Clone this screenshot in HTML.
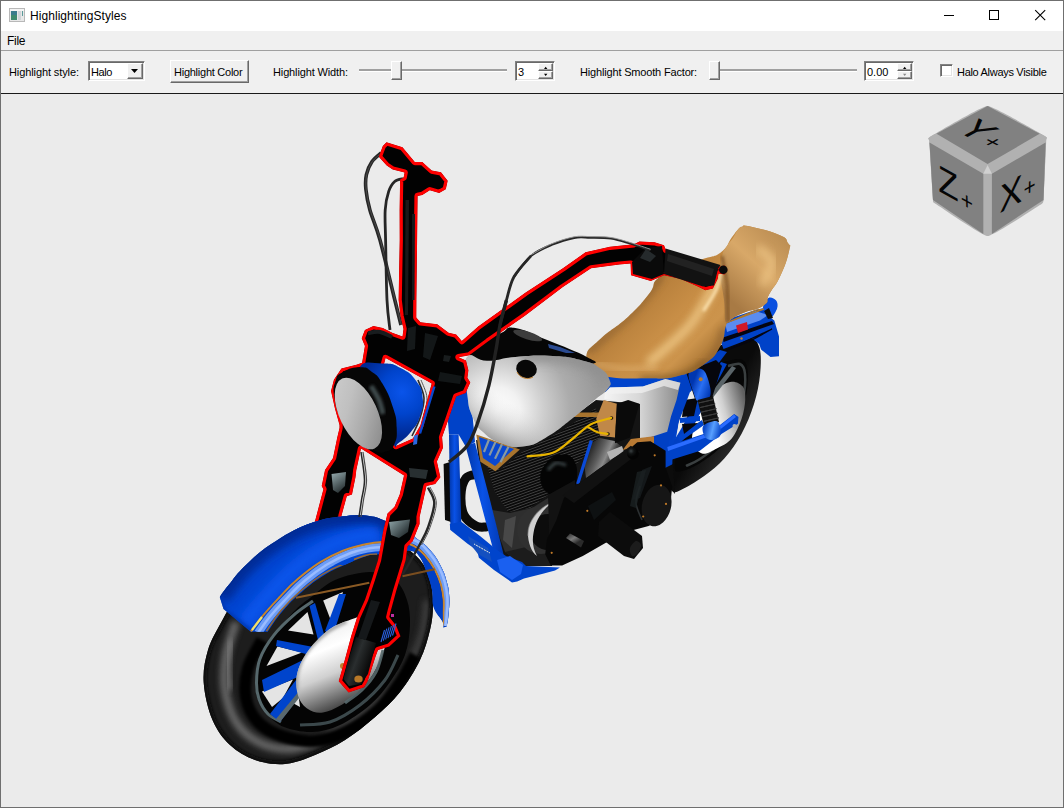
<!DOCTYPE html>
<html><head><meta charset="utf-8"><title>HighlightingStyles</title>
<style>
html,body{margin:0;padding:0;}
body{width:1064px;height:808px;overflow:hidden;background:#f0f0f0;font-family:"Liberation Sans",sans-serif;font-size:11px;color:#000;position:relative;}
.abs{position:absolute;}
#win{position:absolute;left:0;top:0;width:1062px;height:806px;border:1px solid #6f6f6f;background:#f0f0f0;}
#title{position:absolute;left:1px;top:1px;width:1062px;height:30px;background:#fff;}
#title .t{position:absolute;left:29px;top:8px;letter-spacing:0.06px;font-size:12px;line-height:14px;white-space:nowrap;}
#menu{position:absolute;left:1px;top:31px;width:1062px;height:19px;background:#f0f0f0;}
#menu .t{position:absolute;left:6px;top:3px;letter-spacing:-0.3px;font-size:12px;line-height:14px;}
#sep1{position:absolute;left:1px;top:50px;width:1062px;height:1px;background:#a0a0a0;}
#tb{position:absolute;left:1px;top:51px;width:1062px;height:42px;background:#f0f0f0;}
.lbl{position:absolute;top:66px;font-size:11px;line-height:13px;white-space:nowrap;}
#sep2{position:absolute;left:1px;top:93px;width:1062px;height:1px;background:#1a1a1a;}
#view{position:absolute;left:1px;top:94px;width:1062px;height:713px;background:#ebebeb;overflow:hidden;}
.sunk{position:absolute;background:#fff;border:1px solid;border-color:#828282 #fff #fff #828282;box-shadow:inset 1px 1px 0 #696969, inset -1px -1px 0 #e3e3e3;box-sizing:border-box;}
.btn{position:absolute;background:#f0f0f0;box-sizing:border-box;border:1px solid;border-color:#fff #696969 #696969 #fff;box-shadow:inset -1px -1px 0 #a0a0a0, inset 1px 1px 0 #f0f0f0;}
.groove{position:absolute;height:1px;background:#a0a0a0;box-shadow:0 1px 0 #fff, 0 -1px 0 #a0a0a0;}
</style></head><body>
<div id="win"></div>
<div id="title">
 <svg class="abs" style="left:8px;top:7px" width="16" height="14" viewBox="0 0 16 14">
  <rect x="0.5" y="0.5" width="15" height="13" fill="#e8e8e8" stroke="#b8b8b8"/>
  <rect x="1" y="1" width="14" height="2" fill="#f4f4f4"/>
  <rect x="2" y="3" width="6" height="9" fill="#3f8a6e"/>
  <rect x="2" y="3" width="6" height="4" fill="#3a7c8c"/>
  <rect x="9" y="3" width="3" height="9" fill="#d0d4d8"/>
  <rect x="13" y="3" width="1" height="5" fill="#5a9a9a"/>
 </svg>
 <div class="t">HighlightingStyles</div>
 <svg class="abs" style="left:930px;top:0" width="132" height="30" viewBox="0 0 132 30">
  <path d="M13 14.5h10" stroke="#000" stroke-width="1" fill="none"/>
  <rect x="58.5" y="9.5" width="9" height="9" stroke="#000" stroke-width="1" fill="none"/>
  <path d="M104.200 9.200l10 10M114.200 9.200l-10 10" stroke="#000" stroke-width="1.1" fill="none"/>
 </svg>
</div>
<div id="menu"><div class="t">File</div></div>
<div id="sep1"></div>
<div id="tb"></div>
<div class="lbl" style="left:9px;letter-spacing:-0.1px">Highlight style:</div>
<div class="sunk" style="left:88px;top:61px;width:57px;height:20px"></div>
<div class="lbl" style="left:91px;letter-spacing:-0.4px">Halo</div>
<div class="btn" style="left:127px;top:63px;width:16px;height:16px"></div>
<svg class="abs" style="left:130px;top:68px" width="9" height="6"><path d="M1 1h7l-3.500 4z" fill="#000"/></svg>
<div class="btn" style="left:170px;top:60px;width:79px;height:23px"></div>
<div class="lbl" style="left:174px;letter-spacing:-0.25px">Highlight Color</div>
<div class="lbl" style="left:273px;letter-spacing:-0.13px">Highlight Width:</div>
<div class="groove" style="left:359px;top:70px;width:148px"></div>
<div class="btn" style="left:391px;top:61px;width:11px;height:19px"></div>
<div class="sunk" style="left:515px;top:61px;width:40px;height:20px"></div>
<div class="lbl" style="left:518px">3</div>
<div class="btn" style="left:538px;top:63px;width:15px;height:8px"></div>
<div class="btn" style="left:538px;top:71px;width:15px;height:8px"></div>
<svg class="abs" style="left:542px;top:65px" width="7" height="12"><path d="M2 4h3.400l-1.700-2.200z M2 8.800h3.400l-1.700 2.200z" fill="#000"/></svg>
<div class="lbl" style="left:580px;letter-spacing:-0.17px">Highlight Smooth Factor:</div>
<div class="groove" style="left:712px;top:70px;width:145px"></div>
<div class="btn" style="left:709px;top:61px;width:11px;height:19px"></div>
<div class="sunk" style="left:864px;top:61px;width:50px;height:20px"></div>
<div class="lbl" style="left:867px">0.00</div>
<div class="btn" style="left:897px;top:63px;width:15px;height:8px"></div>
<div class="btn" style="left:897px;top:71px;width:15px;height:8px"></div>
<svg class="abs" style="left:901px;top:65px" width="7" height="12"><path d="M2 4h3.400l-1.700-2.200z" fill="#000"/><path d="M2 8.800h3.400l-1.700 2.200z" fill="#888"/></svg>
<div class="sunk" style="left:940px;top:64px;width:13px;height:13px"></div>
<div class="lbl" style="left:957px;letter-spacing:-0.3px">Halo Always Visible</div>
<div id="sep2"></div>
<div id="view">
<svg id="scene" width="1062" height="713" viewBox="1 94 1062 713" style="position:absolute;left:0;top:0">
<defs><linearGradient id="gTire" gradientUnits="userSpaceOnUse" x1="203" y1="700" x2="300" y2="640"><stop offset="0" stop-color="#0a0a0a"/><stop offset="0.25" stop-color="#3a3a3a"/><stop offset="0.45" stop-color="#1a1a1a"/><stop offset="1" stop-color="#050505"/></linearGradient><linearGradient id="gFender" gradientUnits="userSpaceOnUse" x1="230" y1="640" x2="330" y2="500"><stop offset="0" stop-color="#0038b0"/><stop offset="0.35" stop-color="#0048d8"/><stop offset="0.7" stop-color="#0044cc"/><stop offset="1" stop-color="#0036a8"/></linearGradient><linearGradient id="gHub" gradientUnits="userSpaceOnUse" x1="300" y1="690" x2="385" y2="650"><stop offset="0" stop-color="#8a8a8a"/><stop offset="0.3" stop-color="#f4f4f4"/><stop offset="0.55" stop-color="#ffffff"/><stop offset="0.8" stop-color="#9a9a9a"/><stop offset="1" stop-color="#303030"/></linearGradient><linearGradient id="gLens" gradientUnits="userSpaceOnUse" x1="378" y1="388" x2="338" y2="436"><stop offset="0" stop-color="#8a8a8a"/><stop offset="0.35" stop-color="#a8a8a8"/><stop offset="0.7" stop-color="#c0c0c0"/><stop offset="1" stop-color="#cacaca"/></linearGradient><radialGradient id="gHL" gradientUnits="userSpaceOnUse" cx="402" cy="392" r="44" ><stop offset="0" stop-color="#0a54ea"/><stop offset="0.5" stop-color="#0044cc"/><stop offset="1" stop-color="#002a94"/></radialGradient><linearGradient id="gTank" gradientUnits="userSpaceOnUse" x1="470" y1="440" x2="580" y2="350"><stop offset="0" stop-color="#707070"/><stop offset="0.18" stop-color="#d8d8d8"/><stop offset="0.4" stop-color="#ffffff"/><stop offset="0.6" stop-color="#e0e0e0"/><stop offset="0.85" stop-color="#a0a0a0"/><stop offset="1" stop-color="#8c8c8c"/></linearGradient><linearGradient id="gSeat" gradientUnits="userSpaceOnUse" x1="640" y1="380" x2="700" y2="250"><stop offset="0" stop-color="#a87840"/><stop offset="0.3" stop-color="#c89858"/><stop offset="0.6" stop-color="#d8a868"/><stop offset="1" stop-color="#b88848"/></linearGradient><linearGradient id="gSeatB" gradientUnits="userSpaceOnUse" x1="730" y1="300" x2="790" y2="235"><stop offset="0" stop-color="#a87a44"/><stop offset="0.5" stop-color="#d8a868"/><stop offset="1" stop-color="#b88a50"/></linearGradient><linearGradient id="gSide" gradientUnits="userSpaceOnUse" x1="605" y1="400" x2="680" y2="400"><stop offset="0" stop-color="#f4f4f4"/><stop offset="0.45" stop-color="#d8d8d8"/><stop offset="1" stop-color="#8a8a8a"/></linearGradient><linearGradient id="gDrum" gradientUnits="userSpaceOnUse" x1="712" y1="420" x2="748" y2="410"><stop offset="0" stop-color="#ffffff"/><stop offset="0.4" stop-color="#d0d0d0"/><stop offset="1" stop-color="#606060"/></linearGradient><linearGradient id="gRT" gradientUnits="userSpaceOnUse" x1="700" y1="440" x2="750" y2="470"><stop offset="0" stop-color="#0a0a0a"/><stop offset="0.35" stop-color="#1c1c1c"/><stop offset="0.7" stop-color="#303030"/><stop offset="1" stop-color="#141414"/></linearGradient><linearGradient id="gShk" gradientUnits="userSpaceOnUse" x1="692" y1="385" x2="711" y2="392"><stop offset="0" stop-color="#0036b0"/><stop offset="0.45" stop-color="#2a70f4"/><stop offset="1" stop-color="#0038b4"/></linearGradient><linearGradient id="gShk2" gradientUnits="userSpaceOnUse" x1="704" y1="430" x2="720" y2="434"><stop offset="0" stop-color="#0a48c8"/><stop offset="0.5" stop-color="#58a0ff"/><stop offset="1" stop-color="#0a48c8"/></linearGradient><filter id="bl5" x="-30%" y="-30%" width="160%" height="160%"><feGaussianBlur stdDeviation="4.500"/></filter><linearGradient id="gSeatM" gradientUnits="userSpaceOnUse" x1="628" y1="300" x2="700" y2="372"><stop offset="0" stop-color="#986830"/><stop offset="0.12" stop-color="#b8803c"/><stop offset="0.45" stop-color="#c88e46"/><stop offset="0.75" stop-color="#cc944c"/><stop offset="1" stop-color="#a47030"/></linearGradient><linearGradient id="gSeatB" gradientUnits="userSpaceOnUse" x1="722" y1="290" x2="790" y2="240"><stop offset="0" stop-color="#966830"/><stop offset="0.35" stop-color="#c08a48"/><stop offset="0.7" stop-color="#dca660"/><stop offset="1" stop-color="#be8c48"/></linearGradient><pattern id="fins" width="4" height="2.600" patternUnits="userSpaceOnUse" patternTransform="rotate(-20)"><rect width="4" height="2.600" fill="#0a0a0a"/><rect y="0" width="4" height="0.800" fill="#454545"/></pattern><linearGradient id="gCyl" gradientUnits="userSpaceOnUse" x1="590" y1="450" x2="616" y2="462"><stop offset="0" stop-color="#2a2a2a"/><stop offset="0.35" stop-color="#5c5c5c"/><stop offset="0.6" stop-color="#8a8a8a"/><stop offset="0.8" stop-color="#444"/><stop offset="1" stop-color="#1a1a1a"/></linearGradient><linearGradient id="gTube" gradientUnits="objectBoundingBox" x1="0" y1="0" x2="1" y2="0"><stop offset="0" stop-color="#0036a8"/><stop offset="0.45" stop-color="#0a52e6"/><stop offset="1" stop-color="#0038b0"/></linearGradient><linearGradient id="gKick" gradientUnits="userSpaceOnUse" x1="566" y1="536" x2="572" y2="546"><stop offset="0" stop-color="#3a3a3a"/><stop offset="0.5" stop-color="#7a7a7a"/><stop offset="1" stop-color="#2a2a2a"/></linearGradient><radialGradient id="gBall" gradientUnits="userSpaceOnUse" cx="631" cy="451" r="6" ><stop offset="0" stop-color="#3a4042"/><stop offset="0.5" stop-color="#101212"/><stop offset="1" stop-color="#030303"/></radialGradient><radialGradient id="gTankRad" gradientUnits="userSpaceOnUse" cx="497" cy="410" r="104" ><stop offset="0" stop-color="#ffffff"/><stop offset="0.22" stop-color="#f2f2f2"/><stop offset="0.45" stop-color="#cecece"/><stop offset="0.7" stop-color="#acacac"/><stop offset="1" stop-color="#989898"/></radialGradient><radialGradient id="gTankR" gradientUnits="userSpaceOnUse" cx="600" cy="380" r="60" ><stop offset="0" stop-color="#9c9c9c"/><stop offset="0.6" stop-color="#a8a8a8"/><stop offset="1" stop-color="#a8a8a8"/></radialGradient><linearGradient id="gTank2" gradientUnits="userSpaceOnUse" x1="540" y1="400" x2="610" y2="375"><stop offset="0" stop-color="#a4a4a4"/><stop offset="1" stop-color="#a4a4a4"/></linearGradient><linearGradient id="gTankTip" gradientUnits="userSpaceOnUse" x1="470" y1="440" x2="500" y2="395"><stop offset="0" stop-color="rgba(90,90,90,0.85)"/><stop offset="0.5" stop-color="rgba(140,140,140,0.35)"/><stop offset="1" stop-color="rgba(200,200,200,0)"/></linearGradient><filter id="bl3" x="-20%" y="-20%" width="140%" height="140%"><feGaussianBlur stdDeviation="3"/></filter><filter id="bl2" x="-20%" y="-20%" width="140%" height="140%"><feGaussianBlur stdDeviation="1.800"/></filter><radialGradient id="gHub2" gradientUnits="userSpaceOnUse" cx="318" cy="652" r="80" ><stop offset="0" stop-color="#ffffff"/><stop offset="0.25" stop-color="#f6f6f6"/><stop offset="0.48" stop-color="#c0c0c0"/><stop offset="0.72" stop-color="#606060"/><stop offset="1" stop-color="#181818"/></radialGradient><linearGradient id="gHub3" gradientUnits="userSpaceOnUse" x1="312" y1="622" x2="350" y2="716"><stop offset="0" stop-color="#e8e8e8"/><stop offset="0.3" stop-color="#ffffff"/><stop offset="0.55" stop-color="#d0d0d0"/><stop offset="0.78" stop-color="#707070"/><stop offset="1" stop-color="#141414"/></linearGradient><radialGradient id="gFen2" gradientUnits="userSpaceOnUse" cx="250" cy="625" r="230" ><stop offset="0" stop-color="#0a52e4"/><stop offset="0.35" stop-color="#0046d0"/><stop offset="0.7" stop-color="#003cbc"/><stop offset="1" stop-color="#0034a4"/></radialGradient><linearGradient id="gSh1" gradientUnits="userSpaceOnUse" x1="333" y1="474" x2="345" y2="492"><stop offset="0" stop-color="#9ab0b4"/><stop offset="1" stop-color="#20282a"/></linearGradient><linearGradient id="gSh2" gradientUnits="userSpaceOnUse" x1="392" y1="521" x2="408" y2="537"><stop offset="0" stop-color="#90a6aa"/><stop offset="1" stop-color="#1c2426"/></linearGradient><linearGradient id="gLegLo" gradientUnits="userSpaceOnUse" x1="350" y1="650" x2="372" y2="658"><stop offset="0" stop-color="#0c0e0e"/><stop offset="0.4" stop-color="#2a2e2f"/><stop offset="1" stop-color="#0a0a0a"/></linearGradient></defs>
<path d="M714 350 C717.2 344.8 718.5 346.2 724.3 344 C730.1 341.8 743.1 336.3 749 337 C754.9 337.7 757.6 341.8 759.5 348 C761.4 354.2 761 365 760.1 374.3 C759.2 383.6 757.1 394.1 754 404 C750.9 413.9 746.6 424.6 741.6 433.7 C736.6 442.8 730.5 451.4 724.3 458.4 C718.1 465.4 711.1 470.8 704.5 475.7 C697.9 480.6 689.9 485.4 684.7 488.1 C679.5 490.8 676.3 493.2 673.5 491.8 C670.7 490.4 668.2 486.1 668 480 C667.8 473.9 668.3 466.7 672 455 C675.7 443.3 684.5 423.3 690 410 C695.5 396.7 701 385 705 375 C709 365 710.8 355.2 714 350Z" fill="url(#gRT)"/>
<path d="M716 366 C720 360.5 720 363 724.3 361.9 C728.6 360.8 737.7 357.8 741.6 359.4 C745.5 361 747.2 365.2 747.8 371.8 C748.4 378.4 747.6 389.5 745.3 399 C743 408.5 738.5 420.4 734.2 428.7 C729.9 436.9 725.1 442.7 719.3 448.5 C713.5 454.3 705.7 459.7 699.5 463.4 C693.3 467.1 686.3 470 682.2 470.8 C678.1 471.6 675.2 473.4 674.8 468.3 C674.4 463.2 675.8 452.2 680 440 C684.2 427.8 694 407.3 700 395 C706 382.7 712 371.5 716 366Z" fill="#060606"/>
<path d="M728 366 C730 365.7 737.2 362.7 740 364 C742.8 365.3 744.5 368.3 745 374 C745.5 379.7 745 389.5 743 398 C741 406.5 737 417.3 733 425 C729 432.7 724.5 438.3 719 444 C713.5 449.7 705.5 455.3 700 459 C694.5 462.7 688.3 464.8 686 466" fill="none" stroke="#3a3f40" stroke-width="2.500"/>
<path d="M716.8 389 C722.1 384.3 727.4 382.1 731.7 381.7 C736 381.3 740.5 383.7 742.8 386.6 C745.1 389.5 745.5 393.6 745.3 399 C745.1 404.4 743.9 412.2 741.6 418.8 C739.3 425.4 735.8 433.7 731.7 438.6 C727.6 443.6 721.8 446 716.8 448.5 C711.8 451 706.1 454.9 702 453.5 C697.9 452.1 692.3 447.2 692 440 C691.7 432.8 695.9 418.5 700 410 C704.1 401.5 711.5 393.7 716.8 389Z" fill="url(#gDrum)"/>
<path d="M676 398 L683 396 L674 450 L666 452Z" fill="#0044cc"/>
<path d="M721 362 L727 364 L690 432 L676 448 L672 444Z" fill="#0040c4"/>
<path d="M732 366 L736 368 L708 404 L704 402Z" fill="#5a6468"/>
<path d="M680 418 L700 416 L700 421 L680 423Z" fill="#0044cc"/>
<path d="M678 436 L702 420 L704 425 L680 442Z" fill="#0044cc"/>
<path d="M684 400 L698 398 L694 416 L682 417Z" fill="#07070c"/>
<path d="M682 424 L698 423 L684 434Z" fill="#07070c"/>
<path d="M671 426 L678 426 L670 458 L661 458Z" fill="#0042c8"/>
<path d="M646 436 L670 428 L668 454 L648 442Z" fill="#0040c4"/>
<path d="M662 448 L673 446 L672 472 L665 470Z" fill="#0040c4"/>
<path d="M665 468 L673 464 L675 494 L668 486Z" fill="#0c0c0c"/>
<path d="M664.9 448.5 L667.3 446 L711.9 431.2 L734.2 413.9 L738.5 417 L737.9 423.8 L721.8 433.7 L699.5 451 L667.3 460.9Z" fill="#0042c8"/>
<path d="M667.3 447 L711.9 432 L734.2 414.5 L736 417 L713 435 L668 451Z" fill="#2a6cff"/>
<circle cx="734.500" cy="426" r="2" fill="#b0b0b0"/>
<path d="M720 340 L725.4 323.3 L732.9 317.6 L755.5 310.1 L763 308.2 L768.6 297.9 L776.2 300.7 L777.1 308.2 L770.5 317.6 L774.3 320.5 L779 336.4 L779 356.2 L770.5 357.1 L761.1 349.6 L759.2 344 L751.7 338.3 L723.5 349Z" fill="#0042c8"/>
<path d="M763 308.2 C762.7 304.9 766.4 299.1 768.6 297.9 C770.8 296.6 774.8 299 776.2 300.7 C777.6 302.4 778.1 305.4 777.1 308.2 C776.1 311 772.9 317.6 770.5 317.6 C768.1 317.6 763.3 311.5 763 308.2Z" fill="#0a50e0"/>
<path d="M725.4 324 L755.5 311 L768 315 L760 320.5 L727 332Z" fill="#5a8cf0"/>
<path d="M726 323 L756 310.2 L764 309Z" fill="none" stroke="#b07828" stroke-width="1.200"/>
<path d="M723 337.5 L772 321 L774 324 L723.5 342Z" fill="#050510"/>
<path d="M736 325.5 L747 322 L748 329.5 L738 333Z" fill="#d01828"/>
<path d="M724.8 351 L749.5 341.5 L772 329Z" fill="none" stroke="#050510" stroke-width="1.200"/>
<circle cx="741.500" cy="338.500" r="1.200" fill="#c08030"/>
<path d="M764 311 L769 308 L773 318 L768 319Z" fill="#0c0c0c"/>
<path d="M604 374 L690 370 L700 380 L690 392 L640 392 L604 392Z" fill="#0044cc"/>
<path d="M664 388 L690 372 L720 350 L727 352 L712 372 L690 392 L672 440 L664 440Z" fill="#0040c4"/>
<path d="M686 372 L716 360 L722 366 L712 398 L696 402Z" fill="#06060c"/>
<path d="M688.5 374 C689.1 370.1 694.2 368.8 697 368.5 C699.8 368.2 702.7 368.4 705 372 C707.3 375.6 710.1 385.4 710.6 390 C711.1 394.6 710.1 397.6 708 399.5 C705.9 401.4 700.5 402.8 698 401.5 C695.5 400.2 694.9 396.6 693.3 392 C691.7 387.4 687.9 377.9 688.5 374Z" fill="url(#gShk)"/>
<path d="M697.5 400 L713 396 L719 422 L704 426Z" fill="#101010"/>
<path d="M698.5 403 L714 399.5Z" fill="none" stroke="#3c3c3c" stroke-width="1"/>
<path d="M699.8 407.6 L715.2 404.1Z" fill="none" stroke="#3c3c3c" stroke-width="1"/>
<path d="M701.1 412.2 L716.4 408.7Z" fill="none" stroke="#3c3c3c" stroke-width="1"/>
<path d="M702.4 416.8 L717.6 413.3Z" fill="none" stroke="#3c3c3c" stroke-width="1"/>
<path d="M703.7 421.4 L718.8 417.9Z" fill="none" stroke="#3c3c3c" stroke-width="1"/>
<path d="M703.2 426 C705 423.3 713.1 420.7 716 421 C718.9 421.3 719.8 425.5 720.5 428 C721.2 430.5 721.4 434 720 436 C718.6 438 714.5 439.8 712 440 C709.5 440.2 706.5 439.3 705 437 C703.5 434.7 701.4 428.7 703.2 426Z" fill="url(#gShk2)"/>
<circle cx="700.700" cy="379.200" r="2" fill="#b07830"/>
<path d="M586.3 356.4 C587.5 348.1 588.8 349.8 600 339.2 C611.2 328.6 615.2 328.7 628.2 316.7 C641.2 304.7 639.9 305.1 648.9 294.1 C657.9 283.1 648.5 284.3 662 275.3 C675.5 266.3 684.1 266.2 699.7 260.2 C715.3 254.2 711.9 258.7 720.4 252.7 C728.9 246.7 727 243.8 731.7 237.6 C736.4 231.4 735.1 232.5 738 229.5 C740.9 226.5 739.6 227.4 742.5 226.5 C745.4 225.6 739.3 224.1 749 226.3 C758.7 228.5 768.3 230.3 778.7 234.8 C789.1 239.3 785.3 239 788.1 243.3 C790.9 247.6 791.1 242.3 789.1 250.8 C787.1 259.3 785.9 263.8 780.6 275.3 C775.3 286.8 773.8 286.1 769.3 294.1 C764.8 302.1 770.7 300.4 763.7 305.4 C756.7 310.4 752 308.9 743 312.9 C734 316.9 734.4 316.9 729.8 320.4 C725.2 323.9 728.4 319.2 725.9 326 C723.4 332.8 726 335.8 720.3 345.9 C714.6 356 716 355.7 704.7 363.7 C693.4 371.7 693.4 372.1 678 376 C662.6 379.9 665.2 377.9 646.8 378.2 C628.4 378.5 622.7 379.1 609 377 C595.3 374.9 601.7 375.9 595.6 370.4 C589.5 364.9 585.1 364.7 586.3 356.4Z" fill="url(#gSeatM)"/>
<clipPath id="cSeat"><path d="M586.3 356.4 C587.5 348.1 588.8 349.8 600 339.2 C611.2 328.6 615.2 328.7 628.2 316.7 C641.2 304.7 639.9 305.1 648.9 294.1 C657.9 283.1 648.5 284.3 662 275.3 C675.5 266.3 684.1 266.2 699.7 260.2 C715.3 254.2 711.9 258.7 720.4 252.7 C728.9 246.7 727 243.8 731.7 237.6 C736.4 231.4 735.1 232.5 738 229.5 C740.9 226.5 739.6 227.4 742.5 226.5 C745.4 225.6 739.3 224.1 749 226.3 C758.7 228.5 768.3 230.3 778.7 234.8 C789.1 239.3 785.3 239 788.1 243.3 C790.9 247.6 791.1 242.3 789.1 250.8 C787.1 259.3 785.9 263.8 780.6 275.3 C775.3 286.8 773.8 286.1 769.3 294.1 C764.8 302.1 770.7 300.4 763.7 305.4 C756.7 310.4 752 308.9 743 312.9 C734 316.9 734.4 316.9 729.8 320.4 C725.2 323.9 728.4 319.2 725.9 326 C723.4 332.8 726 335.8 720.3 345.9 C714.6 356 716 355.7 704.7 363.7 C693.4 371.7 693.4 372.1 678 376 C662.6 379.9 665.2 377.9 646.8 378.2 C628.4 378.5 622.7 379.1 609 377 C595.3 374.9 601.7 375.9 595.6 370.4 C589.5 364.9 585.1 364.7 586.3 356.4Z"/></clipPath>
<g clip-path="url(#cSeat)">
<path d="M721 262 C723.4 245.5 726.3 247.6 733 238 C739.7 228.4 733.5 227.1 746 226 C758.5 224.9 768.3 228.7 780 234 C791.7 239.3 789.5 234.8 790 246 C790.5 257.2 788.4 260 782 276 C775.6 292 776.1 295.9 766 306 C755.9 316.1 754.1 309.2 744 314 C733.9 318.8 733.3 327.7 728 324 C722.7 320.3 725.9 316.5 724 300 C722.1 283.5 718.6 278.5 721 262Z" fill="url(#gSeatB)"/>
<path d="M722 256 C722.8 260.8 726 274 727 285 C728 296 727.8 315.8 728 322" fill="none" stroke="#7a5020" stroke-width="3" filter="url(#bl2)" opacity="0.8"/>
<path d="M650 362 C656.7 355.8 679 338.3 690 325 C701 311.7 711.7 289.2 716 282" fill="none" stroke="#f4d090" stroke-width="7" filter="url(#bl5)" opacity="0.95" stroke-linecap="round"/>
<path d="M704 310 C706 306.7 713.2 296.3 716 290 C718.8 283.7 720.2 275 721 272" fill="none" stroke="#ffe8b8" stroke-width="3" filter="url(#bl2)" opacity="0.9" stroke-linecap="round"/>
<path d="M596 364 C600.8 364.8 615.2 368.3 625 369 C634.8 369.7 650 368.2 655 368" fill="none" stroke="#e4b878" stroke-width="5" filter="url(#bl3)" opacity="0.6" stroke-linecap="round"/>
<path d="M640 379 C646.7 378.5 669 378.8 680 376 C691 373.2 701.7 364.3 706 362" fill="none" stroke="#7a5424" stroke-width="6" filter="url(#bl3)" opacity="0.7"/>
<path d="M760 250 C762 252 771.3 256.7 772 262 C772.7 267.3 765.3 278.7 764 282" fill="none" stroke="#f0c888" stroke-width="8" filter="url(#bl5)" opacity="0.8" stroke-linecap="round"/>
<path d="M590 352 C596.4 346.3 618.4 327.5 628.2 318 C638 308.5 643.3 301.8 648.9 295 C654.5 288.2 659.8 280 662 277" fill="none" stroke="#8a6030" stroke-width="5" filter="url(#bl3)" opacity="0.7"/>
<path d="M700 368 C702.7 365 712.2 356.7 716 350 C719.8 343.3 721.8 331.7 723 328" fill="none" stroke="#8a6030" stroke-width="5" filter="url(#bl3)" opacity="0.7"/>
</g>
<path d="M609.9 387.5 L642.8 386.5 L665.4 379 L680.4 382.8 L676.6 399.7 L671 416.6 L667.2 431.7 L650.3 437.3 L629.6 439.2 L635.3 416.6 L637.1 407.2 L622.1 401.6 L604.2 398.8 L605.2 392.2Z" fill="url(#gSide)"/>
<path d="M609.9 387.5 L642.8 386.5 L665.4 379 L680.4 382.8 L678 390 L664 386 L642 393 L606 394Z" fill="#f2f2f2" opacity="0.7"/>
<path d="M443.6 464 L450 462 L451 522 L445 520Z" fill="#0a0a0a"/>
<path d="M478 474 C476 474.7 468.8 474.5 466 478 C463.2 481.5 461.3 488.8 461 495 C460.7 501.2 461.5 509.8 464 515 C466.5 520.2 472.3 524 476 526 C479.7 528 484.3 526.8 486 527" fill="none" stroke="#0a0a0a" stroke-width="9" stroke-linecap="round"/>
<path d="M476 440 L500 444 L545 437 L596 400 L640 404 L640 445 L600 470 L560 500 L548 560 L520 568 L500 556 L490 520 L480 470Z" fill="#141414"/>
<path d="M484.5 456 L500 470 L522 452 L560 432 L596 408 L600 440 L575 466 L552 492 L530 508 L508 512 L494 490Z" fill="url(#fins)"/>
<path d="M492 510 L510 513 L532 508 L548 498 L560 505 L548 560 L524 566 L505 552 L497 530Z" fill="#2e2e2e"/>
<path d="M505 520 L516 516 L512 548 L503 540Z" fill="#484848"/>
<path d="M505 552 L524 566 L552 566 L556 540Z" fill="#1c1c1c"/>
<circle cx="541" cy="530" r="24" fill="#303030"/>
<circle cx="548" cy="532" r="18" fill="#0c0c0c"/>
<path d="M553 502 C538 508 527 522 528 536 C529 547 533 553 537 556 C533 549 532 541 533.500 533 C535.500 520 543 509 553 502Z" fill="#d0d0d0"/>
<path d="M553 502 C538 508 527 522 528 536" fill="none" stroke="#8a8a8a" stroke-width="1.200" opacity="0.6"/>
<path d="M541 472 C542.7 466.8 548.2 459.7 553 457 C557.8 454.3 566 453.8 570 456 C574 458.2 576.5 464.3 577 470 C577.5 475.7 576.5 485.7 573 490 C569.5 494.3 561 496.3 556 496 C551 495.7 545.5 492 543 488 C540.5 484 539.3 477.2 541 472Z" fill="#040404"/>
<path d="M548 470 C549.3 468.8 553 463.8 556 463 C559 462.2 564.3 464.7 566 465" fill="none" stroke="#3a4446" stroke-width="3" filter="url(#bl2)"/>
<path d="M591 443 L600 438 L614.5 441 L622 447 L604 470 L586 478 L584 462Z" fill="url(#gCyl)"/>
<path d="M607 452 L622 446 L624 452 L610 460Z" fill="#b4b4b4"/>
<path d="M591.3 440.4 L577.7 484Z" fill="none" stroke="#0a4ad8" stroke-width="3.200"/>
<path d="M630.8 439 L654 436.3 L654 443 L622.7 450Z" fill="#b87a34"/>
<path d="M573.6 412.5 L602 412.5 L602 417 L573.6 417Z" fill="#a8742e"/>
<path d="M476.3 434.5 L519.9 449.5 L495.4 471.3 L480.4 461.7Z" fill="#a8742e"/>
<path d="M479 437 L514 449 L495 466 L483 458Z" fill="#0a48d0"/>
<path d="M489 439.5 L484 452Z" fill="none" stroke="#8a9aa0" stroke-width="2.200"/>
<path d="M495.5 441.9 L489.5 455.4Z" fill="none" stroke="#8a9aa0" stroke-width="2.200"/>
<path d="M502 444.3 L495 458.8Z" fill="none" stroke="#8a9aa0" stroke-width="2.200"/>
<path d="M508.5 446.7 L500.5 462.2Z" fill="none" stroke="#8a9aa0" stroke-width="2.200"/>
<path d="M603.7 400 L616.9 403.8 L615 437.6 L600 435.7 L596.2 418.8Z" fill="#c08848"/>
<path d="M616.9 403.8 L628.1 400 L639.4 403.8 L630 437.6 L615 443.3Z" fill="#0a0a0a"/>
<circle cx="611.500" cy="418" r="1.800" fill="#1a1208"/><circle cx="608" cy="434" r="1.800" fill="#1a1208"/>
<path d="M527.5 456.4 C531.7 455.8 545.5 455.5 552.9 452.7 C560.3 449.9 565.4 444.2 571.7 439.5 C578 434.8 583.9 428.1 590.5 424.5 C597.1 420.9 607.8 419 611.2 417.9" fill="none" stroke="#e8b400" stroke-width="2.200" stroke-linecap="round"/>
<path d="M588 427 C589.5 427.8 593.8 430.9 597 432 C600.2 433.1 605.8 433.6 607.5 433.9" fill="none" stroke="#e8b400" stroke-width="2.200" stroke-linecap="round"/>
<path d="M451.8 392 L466 384 L472 410 L475 442 L466 447 L458.6 434.5 L449 434.5 L447 410Z" fill="#0042c8"/>
<path d="M449 434.5 L458.6 434.5 L461.3 521.7 L450.4 530Z" fill="url(#gTube)"/>
<path d="M465.4 445.4 L475 442.7 L490 500 L503.6 554.4 L495.4 558 L480 500Z" fill="url(#gTube)"/>
<path d="M450.4 530 L449.8 524 L461.3 521.7 L480 536 L497 550 L506 556 L522 562 L526 566 L560 567.5 L555 570.5 L542.9 573.8 L524 578.5 L517.2 581.6 L512 582.5 L494 570 L478.9 557.8 L477 550.3 L467.6 543.7Z" fill="#0044cc"/>
<path d="M497 560 L510 556 L523 565 L521 574 L512 580 L500 572Z" fill="#1a60f0"/>
<path d="M468 536 L488 548 L492 562 L478 554 L470 544Z" fill="#1450c0"/>
<path d="M474 544 L490 553Z" fill="none" stroke="#d0d8e0" stroke-width="1" stroke-dasharray="1.500 1.500"/>
<path d="M548 495 L575 480 L575 520 L550 562Z" fill="#121212"/>
<path d="M637.3 442.2 L650.5 441.3 L665.6 450.7 L665.6 467.6 L672.2 486.4 L670.3 505.3 L659.9 520.3 L648.6 526 L627.9 531.6 L605.4 542.9 L582.8 556 L562.1 565.5 L550.8 565.5 L545.2 554.2 L547 539.1 L556.4 520.3 L564 497.7 L575.3 486.4 L597.8 469.5 L620.4 454.5 L629.8 448.8Z" fill="#070707"/>
<ellipse cx="656.600" cy="505.500" rx="14.500" ry="21" transform="rotate(14 656.600 505.500)" fill="#161616"/>
<path d="M562.6 495.3 L630.9 445.8 L640 452 L574 503Z" fill="#111111"/>
<path d="M642 470 L652 466 L640 498 L632 500Z" fill="#1a2022" opacity="0.7"/>
<path d="M640 486 C639.3 488.8 635.7 497.3 636 503 C636.3 508.7 641 517.2 642 520" fill="none" stroke="#2c3032" stroke-width="1.600"/>
<path d="M637 472 L646 470 L636 508 L630 506Z" fill="#1a2022" opacity="0.8"/>
<path d="M588 506 L612 492 L616 500 L594 520Z" fill="#0e1112"/>
<circle cx="587.3" cy="510.8" r="1.100" fill="#c07a28"/>
<circle cx="612.5" cy="522" r="1.100" fill="#c07a28"/>
<circle cx="661" cy="485.4" r="1.100" fill="#c07a28"/>
<circle cx="666" cy="503.9" r="1.100" fill="#c07a28"/>
<circle cx="643.2" cy="516.5" r="1.100" fill="#c07a28"/>
<circle cx="654.7" cy="455.3" r="1.100" fill="#c07a28"/>
<circle cx="551.7" cy="552.8" r="1.100" fill="#c07a28"/>
<circle cx="628" cy="541" r="1.100" fill="#c07a28"/>
<path d="M566 538 L570 533.5 L584 541 L581 547.5Z" fill="url(#gKick)"/>
<path d="M599 522 L610 512 L642 536 L643 548 L634 559 L624 556 L598 536Z" fill="#0c0c0c"/>
<path d="M630 548 C630.7 545.5 634.2 541.5 636 541 C637.8 540.5 640.7 543 641 545 C641.3 547 639.5 551.2 638 553 C636.5 554.8 633.3 556.8 632 556 C630.7 555.2 629.3 550.5 630 548Z" fill="#1c1c1c"/>
<circle cx="633" cy="453.400" r="6" fill="url(#gBall)"/>
<path d="M470 356 C466.7 349.9 478.5 347.5 486 342 C493.5 336.5 495.2 335.9 502 332.6 C508.8 329.3 504.8 326.1 515.3 327.9 C525.8 329.6 530.5 333.3 547.2 340.1 C563.9 346.9 576.3 351.4 586.8 357 C597.3 362.6 598.3 361.9 592 364 C585.7 366.1 581.5 365.1 560 366 C538.5 366.9 521 370.3 500 368 C479 365.7 473.3 362.1 470 356Z" fill="#060606"/>
<ellipse cx="527.700" cy="335.500" rx="15" ry="4" transform="rotate(17 527.700 335.500)" fill="#3c3c3c"/>
<path d="M548 344 L560 347 L575 353 L566 353 L549 348Z" fill="#2a4a90"/>
<path d="M468.2 356.1 C473.7 352.1 474.4 360.6 487 360.8 C499.6 361 497.7 358.3 515.3 357 C532.9 355.7 534.8 355.1 552.9 356.1 C571 357.1 570.5 357.5 583 360.8 C595.5 364.1 592.9 363.3 599.9 368.3 C606.9 373.3 607.3 374.1 609.3 379.6 C611.3 385.1 611.5 383.5 607.5 389 C603.5 394.5 603.8 392.3 594.3 400.3 C584.8 408.3 584.7 409.1 571.7 419.1 C558.7 429.1 558.4 430.6 545.4 437.9 C532.4 445.2 534.3 444.9 522.8 446.4 C511.3 447.9 512.6 447.4 502.1 443.6 C491.6 439.8 491.3 439.8 483.3 432.3 C475.3 424.8 476.3 425.4 472 415.4 C467.7 405.4 468.8 405.2 467.3 394.7 C465.8 384.2 466.3 386.2 466.5 375.9 C466.7 365.6 462.7 360.1 468.2 356.1Z" fill="url(#gTankRad)"/>
<path d="M468.2 356.1 C473.7 352.1 474.4 360.6 487 360.8 C499.6 361 497.7 358.3 515.3 357 C532.9 355.7 534.8 355.1 552.9 356.1 C571 357.1 570.5 357.5 583 360.8 C595.5 364.1 592.9 363.3 599.9 368.3 C606.9 373.3 607.3 374.1 609.3 379.6 C611.3 385.1 611.5 383.5 607.5 389 C603.5 394.5 603.8 392.3 594.3 400.3 C584.8 408.3 584.7 409.1 571.7 419.1 C558.7 429.1 558.4 430.6 545.4 437.9 C532.4 445.2 534.3 444.9 522.8 446.4 C511.3 447.9 512.6 447.4 502.1 443.6 C491.6 439.8 491.3 439.8 483.3 432.3 C475.3 424.8 476.3 425.4 472 415.4 C467.7 405.4 468.8 405.2 467.3 394.7 C465.8 384.2 466.3 386.2 466.5 375.9 C466.7 365.6 462.7 360.1 468.2 356.1Z" fill="url(#gTankR)" opacity="0.0"/>
<clipPath id="cTank"><path d="M468.2 356.1 C473.7 352.1 474.4 360.6 487 360.8 C499.6 361 497.7 358.3 515.3 357 C532.9 355.7 534.8 355.1 552.9 356.1 C571 357.1 570.5 357.5 583 360.8 C595.5 364.1 592.9 363.3 599.9 368.3 C606.9 373.3 607.3 374.1 609.3 379.6 C611.3 385.1 611.5 383.5 607.5 389 C603.5 394.5 603.8 392.3 594.3 400.3 C584.8 408.3 584.7 409.1 571.7 419.1 C558.7 429.1 558.4 430.6 545.4 437.9 C532.4 445.2 534.3 444.9 522.8 446.4 C511.3 447.9 512.6 447.4 502.1 443.6 C491.6 439.8 491.3 439.8 483.3 432.3 C475.3 424.8 476.3 425.4 472 415.4 C467.7 405.4 468.8 405.2 467.3 394.7 C465.8 384.2 466.3 386.2 466.5 375.9 C466.7 365.6 462.7 360.1 468.2 356.1Z"/></clipPath>
<rect x="460" y="380" width="100" height="80" fill="url(#gTankTip)" clip-path="url(#cTank)"/>
<path d="M520 356 C525.5 355.8 542.5 354.3 553 355 C563.5 355.7 575.2 357.9 583 360 C590.8 362.1 595.5 364.2 600 367.5 C604.5 370.8 608.3 377.9 610 380" fill="none" stroke="#8e8e8e" stroke-width="16" filter="url(#bl5)" opacity="0.75" clip-path="url(#cTank)"/>
<ellipse cx="526.500" cy="369" rx="10.500" ry="9" fill="#080808" transform="rotate(20 526.500 369)"/>
<path d="M517 372 A10.500 9 20 0 0 533 377" fill="none" stroke="#c08030" stroke-width="1"/>
<path d="M222.5 620 C218 628.3 211.1 639.6 208 650 C204.9 660.4 202.9 670.8 203.7 682.5 C204.4 694.2 208.1 709.6 212.5 720 C216.9 730.4 222.9 738.3 230 745 C237.1 751.7 245.8 756.8 255 760 C264.2 763.2 275 764.8 285 764 C295 763.2 305 759 315 755 C325 751 335 746.3 345 740 C355 733.7 365.8 725 375 717 C384.2 709 392.5 701.5 400 692 C407.5 682.5 415 670.3 420 660 C425 649.7 427.8 639.2 430 630 C432.2 620.8 433 613.3 433 605 C433 596.7 432.2 587.5 430 580 C427.8 572.5 425 565.8 420 560 C415 554.2 408.3 548.7 400 545 C391.7 541.3 381.7 538.8 370 538 C358.3 537.2 343.3 537.2 330 540 C316.7 542.8 302.5 548.3 290 555 C277.5 561.7 264.2 572.5 255 580 C245.8 587.5 240.4 593.3 235 600 C229.6 606.7 227 611.7 222.5 620Z" fill="#1d1d1d"/>
<clipPath id="cTire"><path d="M222.5 620 C218 628.3 211.1 639.6 208 650 C204.9 660.4 202.9 670.8 203.7 682.5 C204.4 694.2 208.1 709.6 212.5 720 C216.9 730.4 222.9 738.3 230 745 C237.1 751.7 245.8 756.8 255 760 C264.2 763.2 275 764.8 285 764 C295 763.2 305 759 315 755 C325 751 335 746.3 345 740 C355 733.7 365.8 725 375 717 C384.2 709 392.5 701.5 400 692 C407.5 682.5 415 670.3 420 660 C425 649.7 427.8 639.2 430 630 C432.2 620.8 433 613.3 433 605 C433 596.7 432.2 587.5 430 580 C427.8 572.5 425 565.8 420 560 C415 554.2 408.3 548.7 400 545 C391.7 541.3 381.7 538.8 370 538 C358.3 537.2 343.3 537.2 330 540 C316.7 542.8 302.5 548.3 290 555 C277.5 561.7 264.2 572.5 255 580 C245.8 587.5 240.4 593.3 235 600 C229.6 606.7 227 611.7 222.5 620Z"/></clipPath>
<g clip-path="url(#cTire)">
<path d="M236 622 C234.3 627.5 227.8 643.7 226 655 C224.2 666.3 223.3 678.8 225 690 C226.7 701.2 230.5 713.3 236 722 C241.5 730.7 249.3 737.5 258 742 C266.7 746.5 278 749 288 749 C298 749 313 743.2 318 742" fill="none" stroke="#707070" stroke-width="8" filter="url(#bl3)" opacity="0.95"/>
<path d="M232 640 C231.3 644.2 228.3 656.7 228 665 C227.7 673.3 229.7 685.8 230 690" fill="none" stroke="#8a8a8a" stroke-width="5" filter="url(#bl3)" opacity="0.8"/>
<path d="M318 742 C323.3 738.7 339.7 729 350 722 C360.3 715 370.8 708.7 380 700 C389.2 691.3 398 680.8 405 670 C412 659.2 418.3 646.7 422 635 C425.7 623.3 426.2 605.8 427 600" fill="none" stroke="#4a4a4a" stroke-width="7" filter="url(#bl3)" opacity="0.8"/>
<path d="M222.5 620 C218 628.3 211.1 639.6 208 650 C204.9 660.4 202.9 670.8 203.7 682.5 C204.4 694.2 208.1 709.6 212.5 720 C216.9 730.4 222.9 738.3 230 745 C237.1 751.7 245.8 756.8 255 760 C264.2 763.2 275 764.8 285 764 C295 763.2 305 759 315 755 C325 751 335 746.3 345 740 C355 733.7 365.8 725 375 717 C384.2 709 392.5 701.5 400 692 C407.5 682.5 415 670.3 420 660 C425 649.7 427.8 639.2 430 630 C432.2 620.8 433 613.3 433 605 C433 596.7 432.2 587.5 430 580 C427.8 572.5 425 565.8 420 560 C415 554.2 408.3 548.7 400 545 C391.7 541.3 381.7 538.8 370 538 C358.3 537.2 343.3 537.2 330 540 C316.7 542.8 302.5 548.3 290 555 C277.5 561.7 264.2 572.5 255 580 C245.8 587.5 240.4 593.3 235 600 C229.6 606.7 227 611.7 222.5 620Z" fill="none" stroke="#0a0a0a" stroke-width="7" filter="url(#bl2)"/>
<path d="M262 640 C259.7 644.7 250.7 658.3 248 668 C245.3 677.7 244.3 689 246 698 C247.7 707 252 715.7 258 722 C264 728.3 272.7 732.8 282 736 C291.3 739.2 303.3 741.7 314 741 C324.7 740.3 335.3 737.2 346 732 C356.7 726.8 369 718.3 378 710 C387 701.7 393.8 691.2 400 682 C406.2 672.8 412.5 659.5 415 655" fill="none" stroke="#050505" stroke-width="12" filter="url(#bl2)"/>
</g>
<path d="M273.7 635.4 C267.8 643.6 262.8 651.3 259.8 659.2 C256.8 667.1 256.1 676.4 255.8 683 C255.5 689.6 255.8 693.5 257.8 698.8 C259.8 704.1 263.3 710 267.7 714.7 C272.1 719.4 276.6 724.1 284 727 C291.4 729.9 302.7 732.3 312 732 C321.3 731.7 330.3 729.5 340 725 C349.7 720.5 361.7 712.2 370 705 C378.3 697.8 384.2 690.3 390 682 C395.8 673.7 401.7 664.5 405 655 C408.3 645.5 409.7 634.2 410 625 C410.3 615.8 409.5 607.5 407 600 C404.5 592.5 401.2 584.7 395 580 C388.8 575.3 380 572 370 572 C360 572 344.8 575.8 335 580 C325.2 584.2 317.9 592 311.3 597 C304.7 602 301.7 603.6 295.4 610 C289.1 616.4 279.6 627.2 273.7 635.4Z" fill="#040404"/>
<path d="M313 601 C310.1 603.1 301.9 608 295.4 613.7 C288.8 619.4 279.6 627.8 273.7 635.4 C267.8 643 262.7 651.3 259.8 659.2 C256.9 667.1 256.6 676.4 256.5 683 C256.4 689.6 257.1 693.8 259 699 C260.9 704.2 264.3 710.2 268 714 C271.7 717.8 278.8 720.7 281 722" fill="none" stroke="#56686c" stroke-width="3"/>
<path d="M300 725 C305 724.5 320 725.3 330 722 C340 718.7 350.8 712 360 705 C369.2 698 378.7 688.3 385 680 C391.3 671.7 395.8 659.2 398 655" fill="none" stroke="#4a5a5e" stroke-width="3" opacity="0.8"/>
<path d="M288 630.5 L307.5 612 L313.5 634.5Z" fill="#e4e4e4"/>
<path d="M266.5 666 L277.5 646.5 L302 652.5Z" fill="#e4e4e4"/>
<path d="M262 691.5 L293 679.5 L283 698 L272 707Z" fill="#e4e4e4"/>
<path d="M323.2 600.5 L343 592 L333 626Z" fill="#e4e4e4"/>
<path d="M285.5 699 L298 691 L300 707Z" fill="#e4e4e4"/>
<path d="M277 640 L313.3 647 L320 655 L306 654 L276 646Z" fill="#0044cc"/>
<path d="M262 680 L303 660 L308 668 L300 676 L264 692Z" fill="#0044cc"/>
<path d="M270 714 L296 680 L304 690 L280 722Z" fill="#0044cc"/>
<path d="M309.5 606 L315 603 L324 634 L318 640Z" fill="#0044cc"/>
<path d="M325 631 L339 594 L346 594 L333 636Z" fill="#0044cc"/>
<path d="M276 719 L300 690 L303 693 L280 722Z" fill="#5a686c"/>
<path d="M350.9 619.6 C344.9 621.9 336 624.5 329.1 629.5 C322.2 634.5 314.4 642.7 309.3 649.3 C304.2 655.9 300.5 662.8 298.4 669.1 C296.2 675.4 295.9 681.3 296.4 686.9 C296.9 692.5 298.6 698.7 301.4 702.8 C304.2 706.9 309 710.2 313.3 711.7 C317.6 713.2 321.5 713.2 327.1 711.5 C332.7 709.8 340.3 706.2 346.9 701.5 C353.5 696.8 361.4 689.4 366.7 683 C372 676.6 375.4 670.4 378.6 663.2 C381.8 656 386.1 646.9 386 640 C385.9 633.1 381.5 626 378 622 C374.5 618 369.5 616.4 365 616 C360.5 615.6 356.9 617.4 350.9 619.6Z" fill="url(#gHub3)"/>
<clipPath id="cHub"><path d="M350.9 619.6 C344.9 621.9 336 624.5 329.1 629.5 C322.2 634.5 314.4 642.7 309.3 649.3 C304.2 655.9 300.5 662.8 298.4 669.1 C296.2 675.4 295.9 681.3 296.4 686.9 C296.9 692.5 298.6 698.7 301.4 702.8 C304.2 706.9 309 710.2 313.3 711.7 C317.6 713.2 321.5 713.2 327.1 711.5 C332.7 709.8 340.3 706.2 346.9 701.5 C353.5 696.8 361.4 689.4 366.7 683 C372 676.6 375.4 670.4 378.6 663.2 C381.8 656 386.1 646.9 386 640 C385.9 633.1 381.5 626 378 622 C374.5 618 369.5 616.4 365 616 C360.5 615.6 356.9 617.4 350.9 619.6Z"/></clipPath>
<path d="M346 621 C342.5 623 331.7 627.8 325 633 C318.3 638.2 310.7 645.5 306 652 C301.3 658.5 298.7 665.7 297 672 C295.3 678.3 296.2 687 296 690" fill="none" stroke="#9a9a9a" stroke-width="5" filter="url(#bl2)" clip-path="url(#cHub)" opacity="0.8"/>
<circle cx="343" cy="666" r="3" fill="#c08030"/>
<path d="M383 650 C381.8 653.7 379.5 665.3 376 672 C372.5 678.7 367.2 684.8 362 690 C356.8 695.2 347.8 700.8 345 703" fill="none" stroke="#56686c" stroke-width="3" opacity="0.9"/>
<path d="M378 640 L392 628 L397 636 L383 648Z" fill="#2a5ed0"/>
<clipPath id="cFen"><path d="M219.8 596.9 C221.8 594.3 221.9 593.3 228.2 585.6 C234.5 577.9 236 574.3 247 564 C258 553.7 259.9 551.1 275.3 541.4 C290.7 531.7 296.2 528.5 312.9 522.6 C329.6 516.7 333.6 517.5 346.8 516 C360 514.5 360.4 514.9 369.3 516 C378.2 517.1 377.4 517.9 385 520.7 C392.6 523.5 394.5 523.7 402 528 C409.5 532.3 410.7 533.8 417.3 539 C423.9 544.2 424.8 544 430.3 550.3 C435.8 556.6 436.9 558.6 440.7 565.9 C444.5 573.2 444.7 574.2 446.7 581.5 C448.7 588.8 448.9 589.3 449.3 597 C449.7 604.7 449.1 607.5 448.5 614.4 C447.9 621.3 447.1 623.7 446.7 626.5 L443.3 627.4 C443.1 626 444.6 625.9 442.4 621.3 C440.2 616.7 436.1 614.8 433.7 607.5 C431.3 600.2 433.6 598.1 432 590 C430.4 581.9 429.6 580.5 426.8 572.8 C424 565.1 423.5 562.3 419.9 557.2 C416.3 552.1 417 552 411.2 551 C405.4 550 403 552.2 395 553 C387 553.8 383.8 553.8 376.9 554.6 C370 555.4 372.6 554.2 365.6 556.4 C358.6 558.6 356.5 559.6 346.8 564 C337.1 568.4 334.7 568.7 324.2 575.3 C313.7 581.9 311.3 583.9 301.6 592.2 C291.9 600.5 290.7 601.8 282.8 611 C274.9 620.2 271.2 626.9 267.7 631.7 L250.8 631.7 L223.5 609.1 Z"/></clipPath>
<path d="M219.8 596.9 C221.8 594.3 221.9 593.3 228.2 585.6 C234.5 577.9 236 574.3 247 564 C258 553.7 259.9 551.1 275.3 541.4 C290.7 531.7 296.2 528.5 312.9 522.6 C329.6 516.7 333.6 517.5 346.8 516 C360 514.5 360.4 514.9 369.3 516 C378.2 517.1 377.4 517.9 385 520.7 C392.6 523.5 394.5 523.7 402 528 C409.5 532.3 410.7 533.8 417.3 539 C423.9 544.2 424.8 544 430.3 550.3 C435.8 556.6 436.9 558.6 440.7 565.9 C444.5 573.2 444.7 574.2 446.7 581.5 C448.7 588.8 448.9 589.3 449.3 597 C449.7 604.7 449.1 607.5 448.5 614.4 C447.9 621.3 447.1 623.7 446.7 626.5 L443.3 627.4 C443.1 626 444.6 625.9 442.4 621.3 C440.2 616.7 436.1 614.8 433.7 607.5 C431.3 600.2 433.6 598.1 432 590 C430.4 581.9 429.6 580.5 426.8 572.8 C424 565.1 423.5 562.3 419.9 557.2 C416.3 552.1 417 552 411.2 551 C405.4 550 403 552.2 395 553 C387 553.8 383.8 553.8 376.9 554.6 C370 555.4 372.6 554.2 365.6 556.4 C358.6 558.6 356.5 559.6 346.8 564 C337.1 568.4 334.7 568.7 324.2 575.3 C313.7 581.9 311.3 583.9 301.6 592.2 C291.9 600.5 290.7 601.8 282.8 611 C274.9 620.2 271.2 626.9 267.7 631.7 L250.8 631.7 L223.5 609.1 Z" fill="#0046d2"/>
<g clip-path="url(#cFen)">
<path d="M219.8 596.9 C221.8 594.3 221.9 593.3 228.2 585.6 C234.5 577.9 236 574.3 247 564 C258 553.7 259.9 551.1 275.3 541.4 C290.7 531.7 296.2 528.5 312.9 522.6 C329.6 516.7 333.6 517.5 346.8 516 C360 514.5 360.4 514.9 369.3 516 C378.2 517.1 377.4 517.9 385 520.7 C392.6 523.5 394.5 523.7 402 528 C409.5 532.3 410.7 533.8 417.3 539 C423.9 544.2 424.8 544 430.3 550.3 C435.8 556.6 436.9 558.6 440.7 565.9 C444.5 573.2 444.7 574.2 446.7 581.5 C448.7 588.8 448.9 589.3 449.3 597 C449.7 604.7 449.1 607.5 448.5 614.4 C447.9 621.3 447.1 623.7 446.7 626.5" fill="none" stroke="#002c94" stroke-width="20" filter="url(#bl5)" opacity="0.95"/>
<path d="M244.8 623.7 C247.4 620.2 249.5 616.5 256.1 608.6 C262.7 600.7 264.7 598.6 273 589.8 C281.3 581 282.1 579.3 291.8 571 C301.5 562.7 303.9 560.7 314.4 554.1 C324.9 547.5 326.5 547 337 542.8 C347.5 538.6 349.8 538.3 359.6 536.2 C369.4 534.1 374.5 534.5 379 534" fill="none" stroke="#0a58f0" stroke-width="16" filter="url(#bl5)" opacity="0.8"/>
<path d="M219 596 L224 610 L251 632" fill="none" stroke="#0034a8" stroke-width="5" filter="url(#bl2)" opacity="0.7"/>
</g>
<g clip-path="url(#cFen)">
<path d="M258 633 C260.8 629.1 263.4 624.5 270 616.5 C276.6 608.5 278.3 606.9 286.5 598.5 C294.7 590.1 295.6 588.4 305 580.5 C314.4 572.6 316.6 570.8 327 564.5 C337.4 558.2 339.2 557.4 349.5 553.5 C359.8 549.6 362 549.6 371 548 C380 546.4 380.3 548.1 388 546.5 C395.7 544.9 397.4 542.3 404 541 C410.6 539.7 410.8 538.4 416.5 541 C422.2 543.6 423.3 545.9 428.5 552 C433.7 558.1 435 559.9 438.8 567 C442.6 574.1 442.8 575.3 444.8 582.5 C446.8 589.7 446.9 590.6 447.4 598 C447.9 605.4 447.2 607.5 446.8 614 C446.4 620.5 445.8 623.2 445.5 626" fill="none" stroke="#6c9cf6" stroke-width="8" />
<path d="M258 633 C260.8 629.1 263.4 624.5 270 616.5 C276.6 608.5 278.3 606.9 286.5 598.5 C294.7 590.1 295.6 588.4 305 580.5 C314.4 572.6 316.6 570.8 327 564.5 C337.4 558.2 339.2 557.4 349.5 553.5 C359.8 549.6 362 549.6 371 548 C380 546.4 380.3 548.1 388 546.5 C395.7 544.9 397.4 542.3 404 541 C410.6 539.7 410.8 538.4 416.5 541 C422.2 543.6 423.3 545.9 428.5 552 C433.7 558.1 435 559.9 438.8 567 C442.6 574.1 442.8 575.3 444.8 582.5 C446.8 589.7 446.9 590.6 447.4 598 C447.9 605.4 447.2 607.5 446.8 614 C446.4 620.5 445.8 623.2 445.5 626" fill="none" stroke="#9abcff" stroke-width="2.500" />
<path d="M250.8 631.7 C253.4 628.2 255.5 624.5 262.1 616.6 C268.7 608.7 270.7 606.6 279 597.8 C287.3 589 288.1 587.3 297.8 579 C307.5 570.7 309.9 568.7 320.4 562.1 C330.9 555.5 332.5 555 343 550.8 C353.5 546.6 355.8 546.3 365.6 544.2 C375.4 542.1 377 542.3 385 542 C393 541.7 393.5 542.2 400 543 C406.5 543.8 407.2 542.6 413 545.5 C418.8 548.4 419.9 549.8 425 555.5 C430.1 561.2 431.3 563.1 435 570 C438.7 576.9 439 578 441 585 C443 592 443.1 593.2 443.6 600 C444.1 606.8 443.4 607.9 443.3 614 C443.2 620.1 443.1 623.2 443 626" fill="none" stroke="#c8842c" stroke-width="2" />
<path d="M411.2 551 L419.9 557.2 L426.8 572.8 L432 590 L433.7 607.5 L442.4 621.3 L443 626 L442.5 600 L440 585 L434 570 L424 556 L413 546.5Z" fill="#0040c6"/>
</g>
<path d="M266.5 631 C270 626.1 273.6 619.3 281.5 610 C289.4 600.7 290.8 599.4 300.5 591 C310.2 582.6 312.4 580.5 323 574 C333.6 567.5 336.2 567.3 346 563 C355.8 558.7 357.8 557.6 365 555.5 C372.2 553.4 374.2 554.4 377 554" fill="none" stroke="#a06a28" stroke-width="1.400"/>
<path d="M252 630 L262 617Z" fill="none" stroke="#f0e070" stroke-width="2.200"/>
<path d="M219.8 596.9 C221.8 594.3 221.9 593.3 228.2 585.6 C234.5 577.9 236 574.3 247 564 C258 553.7 259.9 551.1 275.3 541.4 C290.7 531.7 296.2 528.5 312.9 522.6 C329.6 516.7 333.6 517.5 346.8 516 C360 514.5 360.4 514.9 369.3 516 C378.2 517.1 377.4 517.9 385 520.7 C392.6 523.5 398 526.3 402 528" fill="none" stroke="#002a88" stroke-width="2" opacity="0.6" clip-path="url(#cFen)"/>
<path d="M296 597.8 L369.3 582.8Z" fill="none" stroke="#8a5a24" stroke-width="2"/>
<path d="M402.5 576.3 L434.6 569.3Z" fill="none" stroke="#7a4e20" stroke-width="2"/>
<path d="M381.3 152.8 C379.7 154.3 374.4 158.1 371.9 161.7 C369.4 165.3 367.4 170 366.4 174.6 C365.4 179.2 365.3 183.5 365.9 189.4 C366.5 195.3 367.5 201.6 369.9 210 C372.2 218.4 375.9 225 380 240 C384.1 255 391.3 285.8 394.8 300 C398.3 314.2 400 320.8 401 325" fill="none" stroke="#262626" stroke-width="3.600"/>
<path d="M381.6 152.8 C380 154.3 374.7 158.1 372.2 161.7 C369.7 165.3 367.7 170 366.7 174.6 C365.7 179.2 365.6 183.5 366.2 189.4 C366.8 195.3 367.8 201.6 370.2 210 C372.6 218.4 376.1 225 380.3 240 C384.5 255 391.6 285.8 395.1 300 C398.6 314.2 400.3 320.8 401.3 325" fill="none" stroke="#5a5a5a" stroke-width="0.700"/>
<path d="M403.6 178.5 C402.1 179 397.2 179.3 394.7 181.5 C392.2 183.7 390.3 186.7 388.7 191.4 C387.1 196.2 385.7 201.9 385.2 210 C384.7 218.1 385.3 225 385.6 240 C385.9 255 386.3 285 387 300 C387.7 315 389.5 325 390 330" fill="none" stroke="#262626" stroke-width="2.800"/>
<path d="M361 452 C361.6 456.7 364.4 472 364.5 480 C364.6 488 362.4 493.8 361.5 500 C360.6 506.2 359.4 514.2 359 517" fill="none" stroke="#262626" stroke-width="1.500"/>
<path d="M363 452 C363.6 456.7 366.4 472 366.5 480 C366.6 488 364.4 493.8 363.5 500 C362.6 506.2 361.4 514.2 361 517" fill="none" stroke="#4a4a4a" stroke-width="1.200"/>
<path d="M428 487.6 C429.1 490.2 434.3 496.4 434.3 503 C434.3 509.6 430.4 520.5 428 527.5 C425.6 534.5 423 538.4 419.6 544.8 C416.2 551.2 410.6 560.9 407.7 565.9 C404.8 570.9 403.4 573.1 402.5 574.5" fill="none" stroke="#262626" stroke-width="2.400"/>
<path d="M430 487 C431.1 489.7 436.3 496.2 436.3 503 C436.3 509.8 432.4 520.5 430 527.5 C427.6 534.5 423 542.1 421.6 545" fill="none" stroke="#505050" stroke-width="1"/>
<path d="M383 355 L434 382 L414 442 L392 448 L368 410Z" fill="#e6e6e6"/>
<path d="M418 380 C419 383 423.7 391.7 424 398 C424.3 404.3 422 411.7 420 418 C418 424.3 413.3 433 412 436" fill="none" stroke="#2a2a2a" stroke-width="1.600"/>
<path d="M421 380 C422 383 426.7 391.7 427 398 C427.3 404.3 423.7 414.7 423 418" fill="none" stroke="#555" stroke-width="1"/>
<clipPath id="cFork"><path d="M382.8 146 L386.5 142.2 L402.5 147.3 L414.8 162 L422.3 162 L431.7 170.5 L441 172.3 L447.7 180.8 L445.8 189.3 L439.2 193 L429.8 190.2 L422.3 195 L417.6 196 L417.1 240 L416.4 300 L416.3 317.6 L420.4 322.3 L437.3 324.2 L448.6 332.7 L456.2 334.6 L461.8 341 L478.2 326.6 L525.3 292.8 L562.9 268.3 L585.5 252.3 L609.9 246.7 L633.9 244.2 L639.5 241.4 L654.6 242.3 L664 245.2 L665.9 249.9 L720.4 266.8 L724.5 265.5 L727.5 270 L724.5 274.5 L718.5 273.4 L717.6 279 L712.9 288.4 L705.4 290.3 L697.8 286.5 L680.9 279 L664 275.3 L650.8 280.9 L631 275.3 L630.6 263.6 L619.3 264.6 L591.1 268.3 L562.9 287.1 L525.3 315.4 L487.6 341.7 L469.3 355.3 L458.5 357.2 L466 360.5 L468.4 370.3 L467.4 377.8 L470.3 382.5 L465.6 392.9 L456.2 396.6 L448.2 420 L442.1 437.3 L443 447.7 L436.9 461.6 L440.4 477.2 L435.2 484.1 L426.5 485.9 L419.6 517 L419.6 524 L412.7 541.3 L407.5 546.5 L405.7 560 L396.2 591 L391 610 L389.3 617 L396.2 625.8 L400.5 636.2 L389.3 646.6 L378 650 L375.4 657 L367.6 681.2 L364.2 687.3 L348.6 692.5 L338.7 681.2 L344.2 662 L351.2 636 L357.2 617 L365 599.8 L372 579 L378 560 L383.2 530.9 L387.5 513.6 L394.5 506.7 L399.7 494.5 L404 475.5 L361 448.6 L356.3 470.3 L355.5 477.2 L352 494.5 L346.8 496.3 L341.6 515.3 L338 540 L310 540 L314.7 522.3 L323.4 489.3 L321.7 485.9 L325 470 L333 458 L337.3 437.3 L339.5 428 L339.5 425 L334.8 407.9 L331 391 L333.9 379.7 L341.4 368.4 L356.4 364.7 L362.1 362.8 L364.9 345.9 L361.7 338.3 L364.9 329.9 L373.4 326 L382.8 328 L392.2 332.7 L402.5 336.4 L403.5 328.9 L400.5 316 L398.6 300 L399.7 240 L399.6 210 L400.1 179.5 L403.6 177.5 L404.6 172.6 L392.7 169.6 L386.7 165.6 L378.8 156.7Z M385.6 358 L431.7 383.5 L420.4 425.3 L412.9 438.4 L396 446 L372 410Z" clip-rule="evenodd"/></clipPath>
<path d="M382.8 146 L386.5 142.2 L402.5 147.3 L414.8 162 L422.3 162 L431.7 170.5 L441 172.3 L447.7 180.8 L445.8 189.3 L439.2 193 L429.8 190.2 L422.3 195 L417.6 196 L417.1 240 L416.4 300 L416.3 317.6 L420.4 322.3 L437.3 324.2 L448.6 332.7 L456.2 334.6 L461.8 341 L478.2 326.6 L525.3 292.8 L562.9 268.3 L585.5 252.3 L609.9 246.7 L633.9 244.2 L639.5 241.4 L654.6 242.3 L664 245.2 L665.9 249.9 L720.4 266.8 L724.5 265.5 L727.5 270 L724.5 274.5 L718.5 273.4 L717.6 279 L712.9 288.4 L705.4 290.3 L697.8 286.5 L680.9 279 L664 275.3 L650.8 280.9 L631 275.3 L630.6 263.6 L619.3 264.6 L591.1 268.3 L562.9 287.1 L525.3 315.4 L487.6 341.7 L469.3 355.3 L458.5 357.2 L466 360.5 L468.4 370.3 L467.4 377.8 L470.3 382.5 L465.6 392.9 L456.2 396.6 L448.2 420 L442.1 437.3 L443 447.7 L436.9 461.6 L440.4 477.2 L435.2 484.1 L426.5 485.9 L419.6 517 L419.6 524 L412.7 541.3 L407.5 546.5 L405.7 560 L396.2 591 L391 610 L389.3 617 L396.2 625.8 L400.5 636.2 L389.3 646.6 L378 650 L375.4 657 L367.6 681.2 L364.2 687.3 L348.6 692.5 L338.7 681.2 L344.2 662 L351.2 636 L357.2 617 L365 599.8 L372 579 L378 560 L383.2 530.9 L387.5 513.6 L394.5 506.7 L399.7 494.5 L404 475.5 L361 448.6 L356.3 470.3 L355.5 477.2 L352 494.5 L346.8 496.3 L341.6 515.3 L338 540 L310 540 L314.7 522.3 L323.4 489.3 L321.7 485.9 L325 470 L333 458 L337.3 437.3 L339.5 428 L339.5 425 L334.8 407.9 L331 391 L333.9 379.7 L341.4 368.4 L356.4 364.7 L362.1 362.8 L364.9 345.9 L361.7 338.3 L364.9 329.9 L373.4 326 L382.8 328 L392.2 332.7 L402.5 336.4 L403.5 328.9 L400.5 316 L398.6 300 L399.7 240 L399.6 210 L400.1 179.5 L403.6 177.5 L404.6 172.6 L392.7 169.6 L386.7 165.6 L378.8 156.7Z M385.6 358 L431.7 383.5 L420.4 425.3 L412.9 438.4 L396 446 L372 410Z" fill="#020202" fill-rule="evenodd" stroke="#ff0000" stroke-width="6.400" stroke-linejoin="round" clip-path="url(#cFork)"/>
<path d="M331.5 474 L346 472 L345 486 L338 493 L333 490Z" fill="url(#gSh1)" opacity="0.9"/>
<path d="M389 522 L410 519.5 L408 532 L399 538 L391 535Z" fill="url(#gSh2)" opacity="0.9"/>
<path d="M409 468 L428 470 L426 479 L410 477Z" fill="#2c3436" opacity="0.9"/>
<path d="M405.5 200 L409 200 L408 315 L405 315Z" fill="#2a2a2a" opacity="0.6"/>
<path d="M408 328 L416 326 L415 349 L407 351Z" fill="#15191a"/>
<path d="M425 333 L438 336 L430 360 L423 357Z" fill="#131718"/>
<path d="M444 355 L451 356 L449 362 L443 361Z" fill="#181c1d"/>
<path d="M368 333 C370 332.8 376 331.3 380 332 C384 332.7 390 336.2 392 337" fill="none" stroke="#181c1e" stroke-width="4"/>
<path d="M440 372 L462 376 L460 384 L438 381Z" fill="#121617"/>
<path d="M412 214 L415 214 L414.5 300 L412 300Z" fill="#14181a"/>
<path d="M381 642 L384.5 630Z" fill="none" stroke="#2a60e0" stroke-width="1.100"/>
<path d="M383.3 640.7 L386.8 628.7Z" fill="none" stroke="#2a60e0" stroke-width="1.100"/>
<path d="M385.6 639.4 L389.1 627.4Z" fill="none" stroke="#2a60e0" stroke-width="1.100"/>
<path d="M387.9 638.1 L391.4 626.1Z" fill="none" stroke="#2a60e0" stroke-width="1.100"/>
<path d="M390.2 636.8 L393.7 624.8Z" fill="none" stroke="#2a60e0" stroke-width="1.100"/>
<path d="M392.5 635.5 L396 623.5Z" fill="none" stroke="#2a60e0" stroke-width="1.100"/>
<rect x="391" y="614" width="3" height="3" fill="#c030a0"/>
<path d="M356 637 L376 643 L368 674 L361 684 L349 686 L343.5 679 L347 664Z" fill="url(#gLegLo)"/>
<path d="M371 600 L380 602 L366 640 L358 638Z" fill="#15181a"/>
<ellipse cx="358.500" cy="679" rx="4.200" ry="3.600" fill="#b87828"/>
<path d="M665.5 248.5 L720.5 265 L718 269 L714 285.5 L703 286.5 L664 274Z" fill="#121212"/>
<path d="M668 254 L714 269 L712 276 L667 261Z" fill="#2a2a2a" opacity="0.7"/>
<circle cx="723.300" cy="269.700" r="4.300" fill="#0a0a0a"/>
<path d="M632 262 L646 248 L662 246 L664 274 L652 279 L633 274Z" fill="#0a0a0a"/>
<path d="M646 249 L656 256 L650 262 L640 258Z" fill="#2c3234" opacity="0.8"/>
<clipPath id="cFenL"><rect x="296" y="505" width="58" height="60"/></clipPath>
<g clip-path="url(#cFenL)">
<path d="M219.8 596.9 C221.8 594.3 221.9 593.3 228.2 585.6 C234.5 577.9 236 574.3 247 564 C258 553.7 259.9 551.1 275.3 541.4 C290.7 531.7 296.2 528.5 312.9 522.6 C329.6 516.7 333.6 517.5 346.8 516 C360 514.5 360.4 514.9 369.3 516 C378.2 517.1 377.4 517.9 385 520.7 C392.6 523.5 394.5 523.7 402 528 C409.5 532.3 410.7 533.8 417.3 539 C423.9 544.2 424.8 544 430.3 550.3 C435.8 556.6 436.9 558.6 440.7 565.9 C444.5 573.2 444.7 574.2 446.7 581.5 C448.7 588.8 448.9 589.3 449.3 597 C449.7 604.7 449.1 607.5 448.5 614.4 C447.9 621.3 447.1 623.7 446.7 626.5 L443.3 627.4 C443.1 626 444.6 625.9 442.4 621.3 C440.2 616.7 436.1 614.8 433.7 607.5 C431.3 600.2 433.6 598.1 432 590 C430.4 581.9 429.6 580.5 426.8 572.8 C424 565.1 423.5 562.3 419.9 557.2 C416.3 552.1 417 552 411.2 551 C405.4 550 403 552.2 395 553 C387 553.8 383.8 553.8 376.9 554.6 C370 555.4 372.6 554.2 365.6 556.4 C358.6 558.6 356.5 559.6 346.8 564 C337.1 568.4 334.7 568.7 324.2 575.3 C313.7 581.9 311.3 583.9 301.6 592.2 C291.9 600.5 290.7 601.8 282.8 611 C274.9 620.2 271.2 626.9 267.7 631.7 L250.8 631.7 L223.5 609.1 Z" fill="#0046d2"/>
<g clip-path="url(#cFen)">
<path d="M219.8 596.9 C221.8 594.3 221.9 593.3 228.2 585.6 C234.5 577.9 236 574.3 247 564 C258 553.7 259.9 551.1 275.3 541.4 C290.7 531.7 296.2 528.5 312.9 522.6 C329.6 516.7 333.6 517.5 346.8 516 C360 514.5 360.4 514.9 369.3 516 C378.2 517.1 377.4 517.9 385 520.7 C392.6 523.5 394.5 523.7 402 528 C409.5 532.3 410.7 533.8 417.3 539 C423.9 544.2 424.8 544 430.3 550.3 C435.8 556.6 436.9 558.6 440.7 565.9 C444.5 573.2 444.7 574.2 446.7 581.5 C448.7 588.8 448.9 589.3 449.3 597 C449.7 604.7 449.1 607.5 448.5 614.4 C447.9 621.3 447.1 623.7 446.7 626.5" fill="none" stroke="#002c94" stroke-width="20" filter="url(#bl5)" opacity="0.95"/>
<path d="M244.8 623.7 C247.4 620.2 249.5 616.5 256.1 608.6 C262.7 600.7 264.7 598.6 273 589.8 C281.3 581 282.1 579.3 291.8 571 C301.5 562.7 303.9 560.7 314.4 554.1 C324.9 547.5 326.5 547 337 542.8 C347.5 538.6 349.8 538.3 359.6 536.2 C369.4 534.1 374.5 534.5 379 534" fill="none" stroke="#0a58f0" stroke-width="16" filter="url(#bl5)" opacity="0.8"/>
<path d="M219 596 L224 610 L251 632" fill="none" stroke="#0034a8" stroke-width="5" filter="url(#bl2)" opacity="0.7"/>
</g>
<g clip-path="url(#cFen)">
<path d="M258 633 C260.8 629.1 263.4 624.5 270 616.5 C276.6 608.5 278.3 606.9 286.5 598.5 C294.7 590.1 295.6 588.4 305 580.5 C314.4 572.6 316.6 570.8 327 564.5 C337.4 558.2 339.2 557.4 349.5 553.5 C359.8 549.6 362 549.6 371 548 C380 546.4 380.3 548.1 388 546.5 C395.7 544.9 397.4 542.3 404 541 C410.6 539.7 410.8 538.4 416.5 541 C422.2 543.6 423.3 545.9 428.5 552 C433.7 558.1 435 559.9 438.8 567 C442.6 574.1 442.8 575.3 444.8 582.5 C446.8 589.7 446.9 590.6 447.4 598 C447.9 605.4 447.2 607.5 446.8 614 C446.4 620.5 445.8 623.2 445.5 626" fill="none" stroke="#6c9cf6" stroke-width="8" />
<path d="M258 633 C260.8 629.1 263.4 624.5 270 616.5 C276.6 608.5 278.3 606.9 286.5 598.5 C294.7 590.1 295.6 588.4 305 580.5 C314.4 572.6 316.6 570.8 327 564.5 C337.4 558.2 339.2 557.4 349.5 553.5 C359.8 549.6 362 549.6 371 548 C380 546.4 380.3 548.1 388 546.5 C395.7 544.9 397.4 542.3 404 541 C410.6 539.7 410.8 538.4 416.5 541 C422.2 543.6 423.3 545.9 428.5 552 C433.7 558.1 435 559.9 438.8 567 C442.6 574.1 442.8 575.3 444.8 582.5 C446.8 589.7 446.9 590.6 447.4 598 C447.9 605.4 447.2 607.5 446.8 614 C446.4 620.5 445.8 623.2 445.5 626" fill="none" stroke="#9abcff" stroke-width="2.500" />
<path d="M250.8 631.7 C253.4 628.2 255.5 624.5 262.1 616.6 C268.7 608.7 270.7 606.6 279 597.8 C287.3 589 288.1 587.3 297.8 579 C307.5 570.7 309.9 568.7 320.4 562.1 C330.9 555.5 332.5 555 343 550.8 C353.5 546.6 355.8 546.3 365.6 544.2 C375.4 542.1 377 542.3 385 542 C393 541.7 393.5 542.2 400 543 C406.5 543.8 407.2 542.6 413 545.5 C418.8 548.4 419.9 549.8 425 555.5 C430.1 561.2 431.3 563.1 435 570 C438.7 576.9 439 578 441 585 C443 592 443.1 593.2 443.6 600 C444.1 606.8 443.4 607.9 443.3 614 C443.2 620.1 443.1 623.2 443 626" fill="none" stroke="#c8842c" stroke-width="2" />
</g></g>
<path d="M360.2 367 C363.5 359.9 371.6 363.2 382.4 363.5 C393.2 363.8 391.6 363.3 400.6 368 C409.6 372.7 410.3 373 416.2 381 C422.1 389 421.7 388.7 422.7 398 C423.7 407.3 423.2 407 420.1 416 C417 425 416.9 424.4 411 431.7 C405.1 439 402.5 439.9 398 443.4 C393.5 446.9 398.8 451.2 394 445 C389.2 438.8 386.4 434.7 380 420 C373.6 405.3 375.3 404.1 370 390 C364.7 375.9 356.9 374.1 360.2 367Z" fill="url(#gHL)"/>
<path d="M343 372 C349.6 368.3 352.6 367.3 360.3 367.3 C368 367.3 366.1 367.7 372 372 C377.9 376.3 376.9 374.3 382.4 383.6 C387.9 392.9 389 395.2 392.8 407 C396.6 418.8 396.4 417.7 396.7 427.8 C397 437.9 397 438.4 394.1 444.7 C391.2 451 391 449.8 386 451.5 C381 453.2 383.3 453.8 375.3 451 C367.3 448.2 364.9 449 356 441 C347.1 433 347.7 432.5 342 421 C336.3 409.5 336.2 408.7 334.5 398 C332.8 387.3 333.2 387.9 335.5 381 C337.8 374.1 336.4 375.7 343 372Z" fill="#060606"/>
<ellipse cx="358.400" cy="413.500" rx="38.500" ry="19" transform="rotate(65 358.400 413.500)" fill="url(#gLens)"/>
<path d="M434.4 386.5 L420 433.5Z" fill="none" stroke="#0a48d0" stroke-width="2.400"/>
<path d="M414 436 L418 434 L417 444 L413 445Z" fill="#2a68e0"/>
<path d="M371 386 C372.3 388.3 377 395.3 379 400 C381 404.7 382.3 411.7 383 414" fill="none" stroke="#4a5658" stroke-width="5" opacity="0.85" filter="url(#bl2)"/>
<path d="M650.6 250.3 C647.2 249.2 636.6 245.5 630 243.5 C623.4 241.5 617.7 239.5 611 238.5 C604.3 237.5 596.1 237.7 590 237.6 C583.9 237.5 580.6 236.6 574.2 237.8 C567.8 239 558.8 241.8 551.6 244.8 C544.4 247.8 537.2 250.7 530.9 256 C524.6 261.3 516.8 273.3 514 276.8" fill="none" stroke="#262626" stroke-width="2.200"/>
<path d="M530.9 256 C528.1 259.5 518.1 269.4 514 276.8 C509.9 284.2 508.7 292.3 506.4 300.3 C504.1 308.3 501.1 320.9 500 325" fill="none" stroke="#262626" stroke-width="2.800"/>
<path d="M506.4 300.3 C505.3 304.4 501.7 317.1 500 325 C498.3 332.9 498.2 337.6 496.4 347.6 C494.5 357.7 492 372.8 488.9 385.3 C485.8 397.9 481.2 412.8 477.6 422.9 C474 433 471.8 439.5 467 446 C462.2 452.5 452 459.3 449 462" fill="none" stroke="#222" stroke-width="3.400"/>
<path d="M650.6 249.3 C647.2 248.2 636.6 244.5 630 242.5 C623.4 240.5 617.7 238.5 611 237.5 C604.3 236.5 596.1 236.7 590 236.6 C583.9 236.5 580.6 235.6 574.2 236.8 C567.8 238 558.8 240.8 551.6 243.8 C544.4 246.8 534.4 253.1 530.9 255" fill="none" stroke="#9a9a9a" stroke-width="0.900"/>
<path d="M987.6 106.1 L1045.6 136.4 L1046 141 L1043.5 200 L1042 203 L987.6 236 L933.5 202 L933 200 L929.5 141.6 L929.5 137.3Z" fill="#b1b1b1"/>
<path d="M987.6 106.1 C993.4 106.1 1042.7 134.7 1045.6 136.4 C1048.5 138.1 1046.3 137.8 1046.2 141 C1046.1 144.2 1043.8 196.8 1043.5 200 C1043.2 203.2 1042.8 203.2 1040 205 C1037.2 206.8 992.8 236.1 987.6 236 C982.4 235.9 938.7 205.8 936 204 C933.3 202.2 933.3 203.1 933 200 C932.7 196.9 929.5 144.7 929.3 141.6 C929.1 138.5 926.6 139.1 929.5 137.3 C932.4 135.5 981.8 106.1 987.6 106.1Z" fill="#b1b1b1"/>
<path d="M987.6 106.1 L1039.6 133.8 L987.6 164.1 L936.5 133.8Z" fill="#818181"/>
<path d="M929.5 142.5 L983.3 173.7 L983.3 234 L933 200Z" fill="#818181"/>
<path d="M991.9 173.7 L1045.6 142.5 L1043.5 200 L991.9 234Z" fill="#818181"/>
<path d="M987.6 165 L983.3 173.7 L991.9 173.7Z" fill="#d0d0d0"/>
<g transform="matrix(58 30.30 -58.10 31.20 987.6 106.1)" font-family="Liberation Sans, sans-serif" fill="#050505" text-anchor="middle"><text x="0.3" y="0.67" font-size="0.58">Y</text><text x="0.63" y="0.665" font-size="0.36">+</text></g>
<g transform="matrix(56 31.00 1.70 65.00 929.5 139.5)" font-family="Liberation Sans, sans-serif" fill="#050505" text-anchor="middle"><text x="0.32" y="0.725" font-size="0.59">Z</text><text x="0.647" y="0.765" font-size="0.37">+</text></g>
<g transform="matrix(56.7 -31.60 -1.30 65.40 987.6 166.7)" font-family="Liberation Sans, sans-serif" fill="#050505" text-anchor="middle"><text x="0.43" y="0.825" font-size="0.6">X</text><text x="0.755" y="0.795" font-size="0.36">+</text></g>
</svg>
</div>
</body></html>
